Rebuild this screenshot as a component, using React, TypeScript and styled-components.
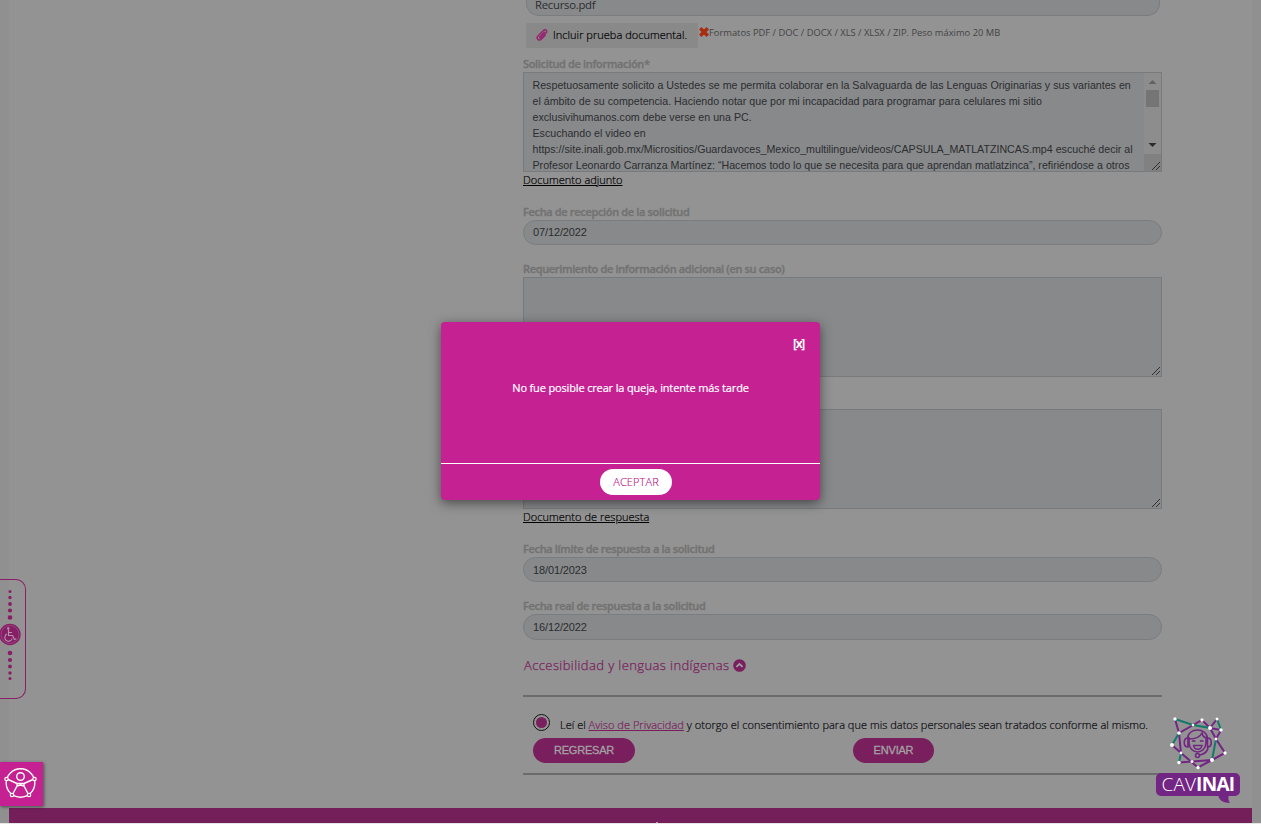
import React from "react";
import styled, { createGlobalStyle } from "styled-components";

const Global = createGlobalStyle`
  *, *::before, *::after { box-sizing: border-box; }
  html, body { margin: 0; padding: 0; }
  body { background: #8f8f8f; overflow: hidden; font-family: "Open Sans", "Noto Sans", sans-serif; }
`;

const Screen = styled.div`
  position: relative;
  width: 1261px;
  height: 824px;
  overflow: hidden;
  background: #909090;
  border-bottom: 1px solid #e6e6e6;
`;

const Sheet = styled.main`
  width: 1243px;
  height: 823px;
  margin-left: 9px;
  background: #939393;
  display: flex;
  flex-direction: column;
  justify-content: space-between;
`;

const Form = styled.form`
  width: 639px;
  margin-left: 514px;
  display: flex;
  flex-direction: column;
`;

const Field = styled.div<{ $h?: number; $low?: boolean }>`
  height: ${(p) => p.$h ?? 25}px;
  flex: none;
  border: 1px solid #7a7d80;
  border-radius: 13px;
  background: #88898b;
  padding: 0 9px ${(p) => (p.$low ? 0 : 1)}px;
  display: flex;
  align-items: center;
  font: 11px "Liberation Sans", Arial, sans-serif;
  letter-spacing: -0.12px;
  color: #2b2d2f;
`;

const FileField = styled(Field)`
  width: 634px;
  height: 16px;
  margin: 0 0 0 3px;
  padding: 0 8px;
  border-top: 0;
  border-radius: 0 0 13px 13px;
  align-items: flex-start;
  font: 11.3px/16px "Open Sans", sans-serif;
  line-height: 9px;
  letter-spacing: -0.25px;
`;

const AttachRow = styled.div`
  display: flex;
  height: 25px;
  margin: 7px 0 9px 3px;
`;

const AttachButton = styled.div`
  width: 172px;
  background: #898989;
  display: flex;
  align-items: center;
  padding: 0 0 2px 10px;
  gap: 5px;
  font-size: 11px;
  font-weight: 300;
  -webkit-text-stroke: 0.2px #000;
  letter-spacing: 0.03px;
  color: #000;
  white-space: nowrap;
`;

const CrossIcon = styled.svg`
  margin: 4px 0 0 1px;
  width: 10px;
  height: 10px;
`;

const Hint = styled.span`
  height: 20px;
  line-height: 20px;
  font-size: 9.36px;
  color: #444;
  white-space: nowrap;
`;

const Label = styled.label<{ $top?: number }>`
  height: 15px;
  margin-top: ${(p) => p.$top ?? 0}px;
  line-height: 14px;
  font-size: 11px;
  font-weight: 600;
  letter-spacing: -0.34px;
  color: #727272;
  -webkit-text-stroke: 0.35px #727272;
  white-space: nowrap;
`;

const Area = styled.div<{ $top?: number }>`
  position: relative;
  height: 100px;
  margin-top: ${(p) => p.$top ?? 0}px;
  border: 1px solid #787b7e;
  background: #88898b;
  display: flex;
  justify-content: space-between;
  overflow: hidden;
`;

const AreaText = styled.div`
  padding: 4px 0 0 8.500px;
  font: 10.67px/16px "Liberation Sans", Arial, sans-serif;
  color: #2b2d2f;
  white-space: pre;
`;

const Scroll = styled.div`
  width: 17px;
  background: #8d8d8d;
  display: flex;
  flex-direction: column;
  align-items: center;
`;

const ScrollArrow = styled.svg`
  width: 17px;
  height: 17px;
  flex: none;
`;

const Thumb = styled.div`
  width: 13px;
  height: 17px;
  background: #757575;
  margin-bottom: 30px;
`;

const ScrollCorner = styled.div`
  width: 17px;
  flex: 1;
  background: #818181;
`;

const Grip = styled.svg`
  position: absolute;
  right: 0;
  bottom: 0;
  width: 10px;
  height: 10px;
`;

const DocLink = styled.a`
  align-self: flex-start;
  height: 17px;
  line-height: 16px;
  font-size: 11px;
  font-weight: 300;
  -webkit-text-stroke: 0.2px #000;
  letter-spacing: 0.02px;
  color: #000;
  text-decoration: underline;
  white-space: nowrap;
`;

const Section = styled.div`
  display: flex;
  align-items: center;
  gap: 4px;
  height: 20px;
  margin: 15px 0 20px 1px;
  font-size: 13px;
  font-weight: 300;
  -webkit-text-stroke: 0.25px #7a1f5e;
  letter-spacing: 0.4px;
  color: #7a1f5e;
`;

const Consent = styled.section`
  height: 80px;
  border-top: 2px solid #6b6b6b;
  border-bottom: 2px solid #6b6b6b;
  padding: 17px 0 0 10px;
`;

const ConsentRow = styled.div`
  display: flex;
  height: 24px;
  gap: 10px;
`;

const ConsentText = styled.span`
  line-height: 22px;
  font-size: 11px;
  font-weight: 300;
  letter-spacing: 0.027px;
  -webkit-text-stroke: 0.2px currentColor;
  color: #0a0a10;
  white-space: nowrap;
  a { color: #7a1f5e; text-decoration: underline; }
`;

const Radio = styled.span`
  flex: none;
  width: 17px;
  height: 17px;
  margin-top: 0;
  border: 1px solid #111;
  border-radius: 50%;
  display: grid;
  place-items: center;
  &::after { content: ""; width: 11px; height: 11px; border-radius: 50%; background: #7a1f5e; }
`;

const Buttons = styled.div`
  display: flex;
  gap: 218px;
`;

const Pill = styled.button<{ $w: number }>`
  width: ${(p) => p.$w}px;
  height: 25px;
  border: 0;
  padding: 0 0 2px;
  border-radius: 13px;
  background: #7a1f5e;
  color: #a3a3a3;
  font: 11px "Liberation Sans", Arial, sans-serif;
  letter-spacing: -0.2px;
  -webkit-text-stroke: 0.3px #a3a3a3;
`;

const Footer = styled.footer`
  height: 15px;
  background: #751f5a;
  display: flex;
  justify-content: center;
  align-items: flex-end;
  &::after { content: ""; width: 2px; height: 1px; margin-left: 52px; background: #b59aa9; }
`;

const Modal = styled.div`
  position: absolute;
  left: 441px;
  top: 322px;
  width: 379px;
  height: 178px;
  border-radius: 4px;
  background: #c52192;
  box-shadow: 0 3px 12px rgba(0, 0, 0, 0.5);
  color: #fff;
  display: flex;
  flex-direction: column;
`;

const ModalBody = styled.div`
  height: 142px;
  border-bottom: 1px solid #fff;
  display: flex;
  flex-direction: column;
`;

const Close = styled.span`
  align-self: flex-end;
  margin: 14px 16px 0 0;
  line-height: 16px;
  font-size: 12px;
  font-weight: 700;
  letter-spacing: -1.3px;
`;

const Message = styled.p`
  margin: 28px 0 0;
  line-height: 16px;
  text-align: center;
  font-size: 11px;
  font-weight: 500;
  letter-spacing: -0.15px;
  -webkit-text-stroke: 0.2px #fff;
`;

const ModalFoot = styled.div`
  flex: 1;
  display: flex;
  justify-content: center;
  padding: 5px 0 0 11px;
`;

const Accept = styled.button`
  width: 72px;
  height: 26px;
  border: 0;
  padding: 0 0 1px;
  border-radius: 13px;
  background: #fff;
  color: #b8128a;
  font: 300 11px "Open Sans", sans-serif;
  letter-spacing: 0.1px;
  -webkit-text-stroke: 0.15px #b8128a;
`;

const SideTab = styled.div`
  position: absolute;
  left: -1px;
  top: 579px;
  width: 27px;
  height: 120px;
  border: 1px solid #8a1f68;
  border-left: 0;
  border-radius: 0 10px 10px 0;
`;

const AccessTile = styled.div`
  position: absolute;
  left: 0;
  top: 762px;
  width: 43px;
  height: 44px;
  background: #c52192;
  box-shadow: 1px 1px 3px rgba(0, 0, 0, 0.5);
`;

const Chat = styled.div`
  position: absolute;
  left: 1154px;
  top: 712px;
  width: 88px;
  height: 94px;
`;

const ChatLabel = styled.div`
  position: absolute;
  left: 2px;
  top: 61px;
  width: 84px;
  height: 23px;
  border-radius: 5px;
  background: #722583;
  color: #fff;
  font: 300 19px/23px "Open Sans", sans-serif;
  letter-spacing: 0.1px;
  text-align: center;
  white-space: nowrap;
  b { font-weight: 700; letter-spacing: -0.7px; }
`;

const Resize = () => (
  <Grip viewBox="0 0 10 10" stroke="#303030" strokeWidth="1" fill="none">
    <path d="M1 9L9 1M5 9L9 5" />
  </Grip>
);

const nodes: [number, number, number][] = [
  [21, 7, 1.7], [48, 8, 1.7], [63, 7, 1.5], [39, 13, 1.3], [56, 16, 2], [67, 18, 1.7], [25, 21, 1.8], [62, 27, 1.4],
  [18, 33, 2], [27, 41, 1.4], [71, 41, 1.7], [25, 50.5, 1.7], [38, 49.5, 1.5], [58, 48, 2], [44, 55.5, 1.7],
];

export default function App() {
  return (
    <>
      <Global />
      <Screen>
        <Sheet>
          <Form>
            <FileField>Recurso.pdf</FileField>
            <AttachRow>
              <AttachButton>
                <svg width="12" height="12" viewBox="0 0 12 12" fill="none" stroke="#96246f" strokeWidth="1.5" strokeLinecap="round">
                  <path d="M8.400 3.200L4 7.700c-.8.9.4 1.900 1.200 1.100L10 4c2-2-.6-4.300-2.500-2.500L2 7c-2.300 2.500.9 5.400 3.200 3.200l4-4" />
                </svg>
                <span>Incluir prueba documental.</span>
              </AttachButton>
              <CrossIcon viewBox="0 0 10 10" fill="#a82c10">
                <path d="M2.500 0L5 2.500 7.500 0 10 2.500 7.400 5 10 7.500 7.500 10 5 7.400 2.500 10 0 7.500 2.600 5 0 2.500Z" />
              </CrossIcon>
              <Hint>Formatos PDF / DOC / DOCX / XLS / XLSX / ZIP. Peso máximo 20 MB</Hint>
            </AttachRow>
            <Label>Solicitud de información*</Label>
            <Area>
              <AreaText>{`Respetuosamente solicito a Ustedes se me permita colaborar en la Salvaguarda de las Lenguas Originarias y sus variantes en
el ámbito de su competencia. Haciendo notar que por mi incapacidad para programar para celulares mi sitio
exclusivihumanos.com debe verse en una PC.
Escuchando el video en
https://site.inali.gob.mx/Micrositios/Guardavoces_Mexico_multilingue/videos/CAPSULA_MATLATZINCAS.mp4 escuché decir al
Profesor Leonardo Carranza Martínez: “Hacemos todo lo que se necesita para que aprendan matlatzinca”, refiriéndose a otros`}</AreaText>
              <Scroll>
                <ScrollArrow viewBox="0 0 17 17" fill="#636363"><path d="M4.500 11h8L8.500 7Z" /></ScrollArrow>
                <Thumb />
                <ScrollArrow viewBox="0 0 17 17" fill="#2b2b2b"><path d="M4.500 6h8L8.500 10Z" /></ScrollArrow>
                <ScrollCorner />
              </Scroll>
              <Resize />
            </Area>
            <DocLink>Documento adjunto</DocLink>
            <Label $top={16}>Fecha de recepción de la solicitud</Label>
            <Field>07/12/2022</Field>
            <Label $top={17}>Requerimiento de información adicional (en su caso)</Label>
            <Area><Resize /></Area>
            <Area $top={32}><Resize /></Area>
            <DocLink>Documento de respuesta</DocLink>
            <Label $top={16}>Fecha límite de respuesta a la solicitud</Label>
            <Field $low>18/01/2023</Field>
            <Label $top={17}>Fecha real de respuesta a la solicitud</Label>
            <Field $h={26}>16/12/2022</Field>
            <Section>
              Accesibilidad y lenguas indígenas
              <svg width="13" height="13" viewBox="0 0 13 13">
                <circle cx="6.500" cy="6.500" r="6.300" fill="#7a1f5e" />
                <path d="M3.400 7.900L6.500 4.900L9.600 7.900" fill="none" stroke="#a3a3a3" strokeWidth="1.700" />
              </svg>
            </Section>
            <Consent>
              <ConsentRow>
                <Radio />
                <ConsentText>
                  Leí el <a>Aviso de Privacidad</a> y otorgo el consentimiento para que mis datos personales sean tratados conforme al mismo.
                </ConsentText>
              </ConsentRow>
              <Buttons>
                <Pill type="button" $w={102}>REGRESAR</Pill>
                <Pill type="button" $w={81}>ENVIAR</Pill>
              </Buttons>
            </Consent>
          </Form>
          <Footer />
        </Sheet>

        <SideTab>
          <svg width="26" height="118" viewBox="0 0 26 118" fill="#861f66">
            <circle cx="11" cy="11.500" r="1.500" /><circle cx="11" cy="17.500" r="1.700" /><circle cx="11" cy="24" r="1.900" />
            <circle cx="11" cy="30.500" r="2.100" /><circle cx="11" cy="37.500" r="2.300" />
            <circle cx="11" cy="73" r="2.300" /><circle cx="11" cy="80" r="2.100" /><circle cx="11" cy="86.500" r="1.900" />
            <circle cx="11" cy="93" r="1.700" /><circle cx="11" cy="98.500" r="1.500" />
            <circle cx="11" cy="54.500" r="10.700" />
            <circle cx="11" cy="54.500" r="9" fill="none" stroke="#a8659a" strokeWidth=".5" />
            <g fill="none" stroke="#b595ab" strokeWidth="1.100">
              <path d="M9.500 50v5.500h4l2 4 1.800-.7M9.500 52.500h3.500M8 54a3.800 3.800 0 1 0 5.200 4.600" />
              <circle cx="9.300" cy="48.500" r=".7" fill="#b595ab" />
            </g>
          </svg>
        </SideTab>

        <AccessTile>
          <svg width="43" height="44" viewBox="0 0 43 44" fill="none" stroke="#fff" strokeWidth="1.400">
            <circle cx="20.500" cy="21" r="14.300" />
            <circle cx="20.500" cy="14.500" r="3.800" />
            <path d="M7 17L17 21.500V24L12.500 32.500M34 17L24 21.500V24L28.500 32.500M17 21.500H24M17 24L20.500 23L24 24" />
            <g fill="#c52192" strokeWidth="1.200">
              <circle cx="6.500" cy="17" r="1.700" /><circle cx="34.500" cy="17" r="1.700" />
              <circle cx="12" cy="33" r="1.700" /><circle cx="29" cy="33" r="1.700" />
            </g>
          </svg>
        </AccessTile>

        <Chat>
          <svg width="88" height="94" viewBox="0 0 88 94" fill="none">
            <path d="M64 83C65 88 69 91 76 91C74 88 74 86 75 83Z" fill="#722583" />
            <g stroke="#722583" strokeWidth="2">
              <path d="M21 7L25 21L48 8L56 16L67 18M25 21L27 41L44 55.500L58 48L71 41L62 27L56 16M18 33L27 41M25 50.500L58 48M62 27L67 18M56 16L63 7" />
            </g>
            <g stroke="#137a6b" strokeWidth="2">
              <path d="M21 7L39 13L56 16M18 33L25 21M27 41L25 50.500M58 48L62 27M63 7L67 18" />
            </g>
            <g stroke="#722583" strokeWidth="1.600">
              <path d="M33.500 27C33.500 15 53.500 15 53.500 27M35 27C41 27 46 25 48 21C49 25 51 26 53 26M35 25V31C36 43 51 43 52 31V25M34 26C29 26 29 35 34 35ZM53.500 26C58.500 26 58.500 35 53.500 35ZM54 35C54 40 50 42 46 43" />
              <path d="M38 29.500q1.500-1.500 3.500 0M46 29.500q1.500-1.500 3.500 0M39.500 33.500H48C47 38.500 40.500 38.500 39.500 33.500Z" strokeWidth="1.300" />
              <circle cx="43.500" cy="43.500" r="2" fill="#939393" />
            </g>
            {nodes.map(([x, y, r]) => <circle key={`${x}-${y}`} cx={x} cy={y} r={r} fill="#fff" />)}
          </svg>
          <ChatLabel>CAV<b>INAI</b></ChatLabel>
        </Chat>

        <Modal role="dialog">
          <ModalBody>
            <Close>[x]</Close>
            <Message>No fue posible crear la queja, intente más tarde</Message>
          </ModalBody>
          <ModalFoot><Accept type="button">ACEPTAR</Accept></ModalFoot>
        </Modal>
      </Screen>
    </>
  );
}
